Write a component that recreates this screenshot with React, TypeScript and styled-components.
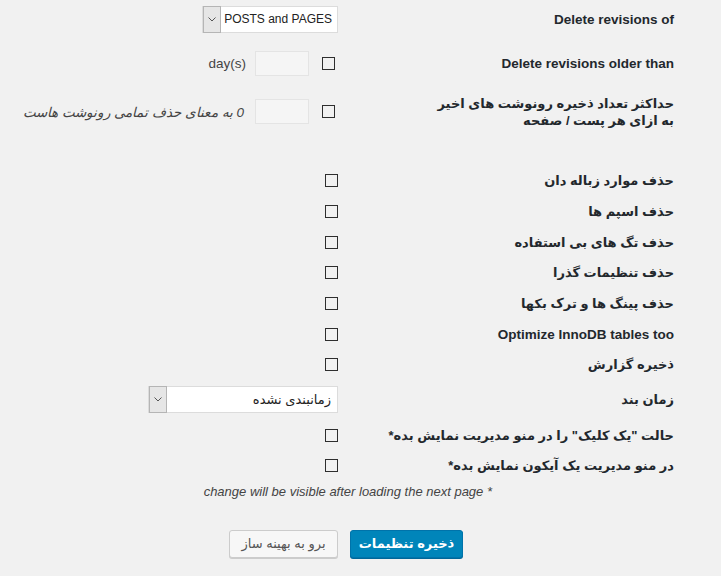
import { createGlobalStyle } from 'styled-components'
import styled from 'styled-components'

const GlobalStyle = createGlobalStyle`
  html, body {
    margin: 0;
    padding: 0;
    background: #f1f1f1;
  }
  body {
    font-family: Tahoma, "Liberation Sans", "DejaVu Sans", sans-serif;
    color: #444;
  }
`

const Page = styled.div`
  direction: rtl;
  width: 721px;
  height: 576px;
  overflow: hidden;
  padding-right: 47px;
  box-sizing: border-box;
`

const Row = styled.div<{ $h: number; $top?: number }>`
  display: flex;
  align-items: center;
  height: ${(p) => p.$h}px;
  box-sizing: border-box;
  padding-top: ${(p) => p.$top ?? 0}px;
`

const Label = styled.div<{ $latin?: boolean }>`
  width: 336px;
  flex: none;
  font-size: ${(p) => (p.$latin ? 13.5 : 13)}px;
  font-weight: bold;
  line-height: 17px;
  color: #23282d;
  text-align: right;
`

const Controls = styled.div`
  display: flex;
  align-items: center;
`

const Spacer = styled.div<{ $h: number }>`
  height: ${(p) => p.$h}px;
`

const Check = styled.span<{ $shift?: number }>`
  display: inline-block;
  width: 13px;
  height: 13px;
  box-sizing: border-box;
  border: 1px solid #2e2e2e;
  margin-right: ${(p) => p.$shift ?? 0}px;
`

const NumInput = styled.span`
  display: inline-block;
  width: 54px;
  height: 25px;
  box-sizing: border-box;
  background: #f5f5f5;
  border: 1px solid #e4e4e4;
  margin-right: 13px;
`

const Hint = styled.span<{ $italic?: boolean }>`
  margin-right: ${(p) => (p.$italic ? 11 : 9)}px;
  font-size: 13.5px;
  color: #444;
  font-style: ${(p) => (p.$italic ? 'italic' : 'normal')};
  white-space: nowrap;
`

const SelectBox = styled.div<{ $w: number }>`
  display: flex;
  align-items: stretch;
  width: ${(p) => p.$w}px;
  height: 27px;
  box-sizing: border-box;
  background: #fff;
  border: 1px solid #dcdcdc;
`

const SelectText = styled.div<{ $ltr?: boolean }>`
  flex: 1;
  display: flex;
  align-items: center;
  padding-right: ${(p) => (p.$ltr ? 5 : 6)}px;
  font-size: ${(p) => (p.$ltr ? 12 : 13)}px;
  color: #222;
  white-space: nowrap;
  overflow: hidden;
`

const SelectArrow = styled.div`
  width: 16px;
  flex: none;
  display: flex;
  align-items: center;
  justify-content: center;
  background: #e6e6e6;
  border: 1px solid #b5b5b5;
  margin: -1px -1px -1px 0;
`

const Note = styled.div`
  height: 26px;
  display: flex;
  align-items: center;
  padding-right: 182px;
  font-size: 13px;
  font-style: italic;
  color: #444;
  white-space: nowrap;
`

const Buttons = styled.div`
  display: flex;
  gap: 12px;
  padding-right: 211px;
  margin-top: 25px;
`

const Button = styled.button<{ $primary?: boolean }>`
  height: 28px;
  padding: 0;
  box-sizing: border-box;
  border-radius: 3px;
  font-family: Tahoma, "Liberation Sans", "DejaVu Sans", sans-serif;
  font-size: 13px;
  line-height: 26px;
  white-space: nowrap;
  cursor: pointer;
  border: 1px solid ${(p) => (p.$primary ? '#0073aa' : '#cccccc')};
  background: ${(p) => (p.$primary ? '#0085ba' : '#f7f7f7')};
  color: ${(p) => (p.$primary ? '#ffffff' : '#555555')};
  font-weight: ${(p) => (p.$primary ? 'bold' : 'normal')};
  box-shadow: 0 1px 0 ${(p) => (p.$primary ? '#006799' : '#cccccc')};
  width: ${(p) => (p.$primary ? 113 : 109)}px;
`

const Chevron = () => (
  <svg width="8" height="5" viewBox="0 0 8 5">
    <path d="M0.5 0.5 L4 4 L7.5 0.5" fill="none" stroke="#555" strokeWidth="1" />
  </svg>
)

const LtrValue = styled.span`
  direction: ltr;
`

const Select = ({ w, value, ltr }: { w: number; value: string; ltr?: boolean }) => (
  <SelectBox $w={w}>
    <SelectText $ltr={ltr}>{ltr ? <LtrValue>{value}</LtrValue> : value}</SelectText>
    <SelectArrow>
      <Chevron />
    </SelectArrow>
  </SelectBox>
)

const options = [
  'حذف موارد زباله دان',
  'حذف اسپم ها',
  'حذف تگ های بی استفاده',
  'حذف تنظیمات گذرا',
  'حذف پینگ ها و ترک بکها',
  'Optimize InnoDB tables too',
  'ذخیره گزارش',
]

export default function App() {
  return (
    <Page>
      <GlobalStyle />
      <Row $h={38}>
        <Label $latin>Delete revisions of</Label>
        <Controls>
          <Select w={136} value="POSTS and PAGES" ltr />
        </Controls>
      </Row>
      <Row $h={50}>
        <Label $latin>Delete revisions older than</Label>
        <Controls>
          <Check $shift={3} />
          <NumInput />
          <Hint>day(s)</Hint>
        </Controls>
      </Row>
      <Row $h={44} $top={3}>
        <Label>
          حداکثر تعداد ذخیره رونوشت های اخیر
          <br />
          به ازای هر پست / صفحه
        </Label>
        <Controls>
          <Check $shift={3} />
          <NumInput />
          <Hint $italic>0 به معنای حذف تمامی رونوشت هاست</Hint>
        </Controls>
      </Row>

      <Spacer $h={33.67} />

      {options.map((o) => (
        <Row $h={30.67} key={o}>
          <Label $latin={o.startsWith('Optimize')}>{o}</Label>
          <Controls>
            <Check />
          </Controls>
        </Row>
      ))}
      <Row $h={38}>
        <Label>زمان بند</Label>
        <Controls>
          <Select w={190} value="زمانبندی نشده" />
        </Controls>
      </Row>
      <Row $h={34}>
        <Label>حالت "یک کلیک" را در منو مدیریت نمایش بده*</Label>
        <Controls>
          <Check />
        </Controls>
      </Row>
      <Row $h={26.33}>
        <Label>در منو مدیریت یک آیکون نمایش بده*</Label>
        <Controls>
          <Check />
        </Controls>
      </Row>
      <Note>* change will be visible after loading the next page</Note>
      <Buttons>
        <Button $primary>ذخیره تنظیمات</Button>
        <Button>برو به بهینه ساز</Button>
      </Buttons>
    </Page>
  )
}
